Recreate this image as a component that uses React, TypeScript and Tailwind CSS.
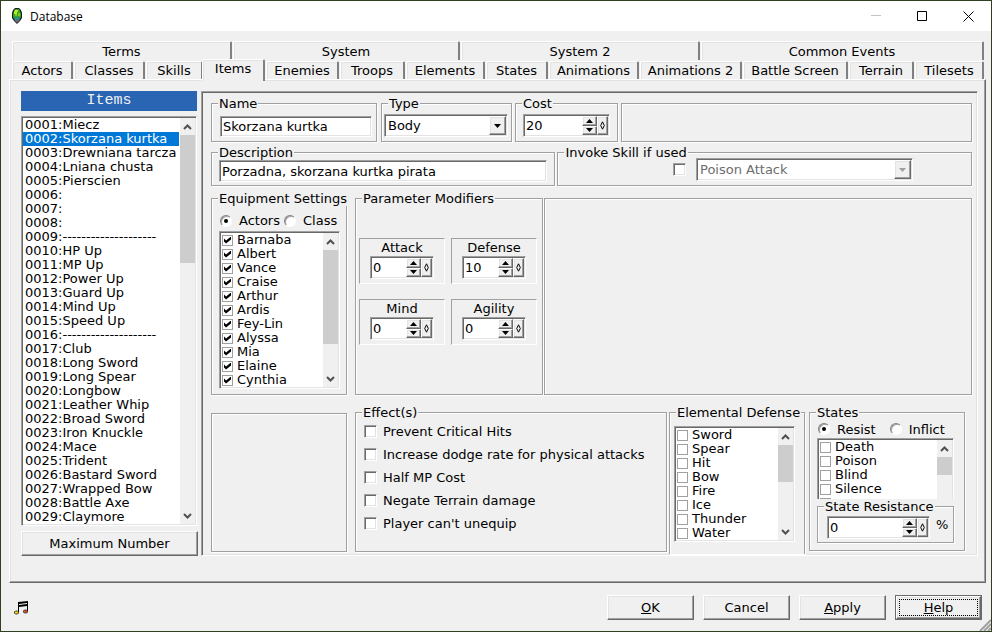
import type { ReactNode } from 'react';
import clsx from 'clsx';

const raised =
  'border border-t-white border-l-white border-r-[#696969] border-b-[#696969] shadow-[inset_-1px_-1px_0_#a0a0a0,inset_1px_1px_0_#e3e3e3]';
const sunken =
  'border border-t-[#a0a0a0] border-l-[#a0a0a0] border-r-white border-b-white shadow-[inset_1px_1px_0_#696969,inset_-1px_-1px_0_#e3e3e3] p-px';
const etched = 'border border-[#a0a0a0] shadow-[1px_1px_0_#fff,inset_1px_1px_0_#fff]';

const topTabs = ['Terms', 'System', 'System 2', 'Common Events'];
const tabs = [
  'Actors',
  'Classes',
  'Skills',
  'Items',
  'Enemies',
  'Troops',
  'Elements',
  'States',
  'Animations',
  'Animations 2',
  'Battle Screen',
  'Terrain',
  'Tilesets',
];

const items = [
  'Miecz',
  'Skorzana kurtka',
  'Drewniana tarcza',
  'Lniana chusta',
  'Pierscien',
  '',
  '',
  '',
  '--------------------',
  'HP Up',
  'MP Up',
  'Power Up',
  'Guard Up',
  'Mind Up',
  'Speed Up',
  '--------------------',
  'Club',
  'Long Sword',
  'Long Spear',
  'Longbow',
  'Leather Whip',
  'Broad Sword',
  'Iron Knuckle',
  'Mace',
  'Trident',
  'Bastard Sword',
  'Wrapped Bow',
  'Battle Axe',
  'Claymore',
];

const actors = ['Barnaba', 'Albert', 'Vance', 'Craise', 'Arthur', 'Ardis', 'Fey-Lin', 'Alyssa', 'Mia', 'Elaine', 'Cynthia'];
const elements = ['Sword', 'Spear', 'Hit', 'Bow', 'Fire', 'Ice', 'Thunder', 'Water'];
const states = ['Death', 'Poison', 'Blind', 'Silence', ''];
const effects = [
  'Prevent Critical Hits',
  'Increase dodge rate for physical attacks',
  'Half MP Cost',
  'Negate Terrain damage',
  "Player can't unequip",
];
const modifiers = [
  { name: 'Attack', value: '0' },
  { name: 'Defense', value: '10' },
  { name: 'Mind', value: '0' },
  { name: 'Agility', value: '0' },
];

// Padding goes on the inner div so that every legend keeps the same indent.
function Group({ title, className, bodyClass, children }: {
  title: string;
  className?: string;
  bodyClass?: string;
  children: ReactNode;
}) {
  return (
    <fieldset className={clsx('min-w-0', etched, className)}>
      <legend className="ml-1.5 whitespace-nowrap bg-[#f0f0f0] px-px leading-[15px]">{title}</legend>
      <div className={bodyClass}>{children}</div>
    </fieldset>
  );
}

function Chevron({ up }: { up?: boolean }) {
  return (
    <svg width="9" height="6" viewBox="0 0 9 6" fill="none" stroke="#505050" strokeWidth="2">
      <path d={up ? 'M1 5 4.500 1.500 8 5' : 'M1 1 4.500 4.500 8 1'} />
    </svg>
  );
}

function ScrollBar({ thumb, down = true }: { thumb: string; down?: boolean }) {
  return (
    <div className="flex w-[15px] shrink-0 flex-col bg-[#f0f0f0]">
      <button type="button" aria-label="Scroll up" className="flex h-[17px] shrink-0 items-center justify-center">
        <Chevron up />
      </button>
      <div className={clsx('shrink-0 bg-[#cdcdcd]', thumb)} />
      {down && (
        <button type="button" aria-label="Scroll down" className="mt-auto flex h-[17px] shrink-0 items-center justify-center">
          <Chevron />
        </button>
      )}
    </div>
  );
}

function CheckList({ names, checked, thumb, down, className }: {
  names: string[];
  checked?: boolean;
  thumb: string;
  down?: boolean;
  className?: string;
}) {
  return (
    <div className={clsx('flex', sunken, className)}>
      <ul className="min-w-0 flex-1 bg-white">
        {names.map((name) => (
          <li key={name}>
            <label className="flex h-3.5 items-center gap-1 pl-px leading-[14px]">
              <input
                type="checkbox"
                defaultChecked={checked}
                className="grid size-[11px] appearance-none place-items-center border border-[#a0a0a0] bg-white checked:before:size-[7px] checked:before:bg-black checked:before:content-[''] checked:before:[clip-path:polygon(0_29%,29%_57%,100%_0,100%_43%,29%_100%,0_71%)]"
              />
              {name}
            </label>
          </li>
        ))}
      </ul>
      <ScrollBar thumb={thumb} down={down} />
    </div>
  );
}

function CheckBox({ label }: { label?: string }) {
  return (
    <input
      type="checkbox"
      aria-label={label}
      className={clsx('size-[13px] shrink-0 appearance-none bg-white checked:bg-[#696969]', sunken)}
    />
  );
}

function Radio({ name, label, checked }: { name: string; label: string; checked?: boolean }) {
  return (
    <label className="flex items-center gap-[7px]">
      <input
        type="radio"
        name={name}
        defaultChecked={checked}
        className="grid size-3 appearance-none place-items-center rounded-full border border-t-[#808080] border-l-[#808080] border-r-white border-b-white bg-white shadow-[inset_1px_1px_0_#a0a0a0] checked:before:size-1 checked:before:rounded-full checked:before:bg-black checked:before:content-['']"
      />
      {label}
    </label>
  );
}

function Triangle({ up, className = 'fill-black' }: { up?: boolean; className?: string }) {
  return (
    <svg width="7" height="4" viewBox="0 0 7 4" className={className}>
      <path d={up ? 'M0 4 3.500 0 7 4z' : 'M0 0 7 0 3.500 4z'} />
    </svg>
  );
}

function Spinner({ label, value, className }: { label: string; value: string; className?: string }) {
  return (
    <div className={clsx('flex h-[23px] bg-white', sunken, className)}>
      <input aria-label={label} defaultValue={value} className="w-0 min-w-0 flex-1 bg-white pl-px outline-none" />
      <div className="flex w-[15px] flex-col">
        <button type="button" aria-label={`Increase ${label}`} className={clsx('flex flex-1 items-center justify-center bg-[#f0f0f0]', raised)}>
          <Triangle up />
        </button>
        <button type="button" aria-label={`Decrease ${label}`} className={clsx('flex flex-1 items-center justify-center bg-[#f0f0f0]', raised)}>
          <Triangle />
        </button>
      </div>
      <button type="button" aria-label={`Adjust ${label}`} className={clsx('flex w-[11px] items-center justify-center bg-[#f0f0f0]', raised)}>
        <svg width="5" height="9" viewBox="0 0 5 9" fill="none" stroke="#000">
          <path d="M2.500 .8 4.300 4.500 2.500 8.200 .7 4.500z" />
        </svg>
      </button>
    </div>
  );
}

function Combo({ label, value, disabled, className }: { label: string; value: string; disabled?: boolean; className?: string }) {
  return (
    <div className={clsx('relative flex h-[23px]', sunken, className)}>
      <select
        aria-label={label}
        disabled={disabled}
        className="w-full appearance-none bg-white pl-0.5 text-black opacity-100 outline-none disabled:text-[#6d6d6d]"
      >
        <option>{value}</option>
      </select>
      <span className={clsx('pointer-events-none absolute inset-y-px right-px flex w-[17px] items-center justify-center bg-[#f0f0f0]', raised)}>
        <Triangle className={disabled ? 'fill-[#a0a0a0]' : 'fill-black'} />
      </span>
    </div>
  );
}

function Tab({ label, active }: { label: string; active?: boolean }) {
  return (
    <button
      type="button"
      role="tab"
      aria-selected={active}
      className={clsx(
        'min-w-0 whitespace-nowrap rounded-t-[2px] border-t border-r-2 border-l border-t-white border-r-[#808080] border-l-white bg-[#f0f0f0] shadow-[inset_1px_1px_0_#e3e3e3]',
        active && 'relative z-10 -mt-0.5 -mb-0.5 -ml-0.5 pb-1',
      )}
    >
      {label}
    </button>
  );
}

function TitleBar() {
  return (
    <header className="flex h-[30px] items-center bg-white">
      <svg width="12" height="17" viewBox="0 0 12 17" className="ml-2.5">
        <path d="M4 0h4l2 2 1 3v5l-2 3-3 3-3-3-2-3V5l1-3z" fill="#171c28" />
        <path d="M4 1h4l1 2 1 3v3l-2 3H4L2 9V6l1-3z" fill="#3aa31c" />
        <path d="M4 2h3v2H6v2H3V4z" fill="#b5ea32" />
        <path d="M7 5h2v3H7zM4 6h2v2H4z" fill="#7ccf1f" />
        <path d="M3 9h6l-1 3H4z" fill="#2b8c8c" />
        <path d="M3 12h6l-3 3z" fill="#77656d" />
      </svg>
      <h1 className="ml-[7px] font-['Open_Sans','Noto_Sans',sans-serif] text-[12px]">Database</h1>
      <div className="ml-auto flex h-full *:flex *:w-[46px] *:items-center *:justify-center">
        <button type="button" aria-label="Minimize" disabled>
          <svg width="11" height="11" stroke="#c4c4c4">
            <path d="M0 4.500h10" />
          </svg>
        </button>
        <button type="button" aria-label="Maximize">
          <svg width="11" height="11" fill="none" stroke="#000">
            <path d="M.5 .5h9v9h-9z" />
          </svg>
        </button>
        <button type="button" aria-label="Close">
          <svg width="11" height="11" fill="none" stroke="#000">
            <path d="M.5 .5l10 10M10.500 .5l-10 10" />
          </svg>
        </button>
      </div>
    </header>
  );
}

function ItemList() {
  return (
    <section className="flex w-[177px] shrink-0 flex-col gap-[5px]">
      <h2 className="mr-px h-5 bg-[#2a65b4] text-center font-['Liberation_Mono',monospace] text-[15px] leading-5 text-[#f0f0f0]">Items</h2>
      <div className={clsx('mr-px flex', sunken)}>
        <ul role="listbox" aria-label="Items" className="min-w-0 flex-1 bg-white pr-px">
          {items.map((item, i) => (
            <li
              key={i}
              role="option"
              aria-selected={i === 1}
              className={clsx('h-3.5 overflow-hidden whitespace-nowrap pl-0.5 leading-[14px]', i === 1 && 'bg-[#0078d7] text-white')}
            >
              {String(i + 1).padStart(4, '0')}:{item}
            </li>
          ))}
        </ul>
        <ScrollBar thumb="h-32" />
      </div>
      <button type="button" className={clsx('h-[25px]', raised)}>
        Maximum Number
      </button>
    </section>
  );
}

function ItemEditor() {
  return (
    <section className={clsx('flex min-w-0 flex-1 flex-col', sunken)}>
      <div className="flex flex-1 flex-col pt-[3px] pr-1 pl-2">
        <div className="grid grid-cols-[167px_131px_103px_1fr] gap-[3px]">
          <Group title="Name" className="mr-px" bodyClass="pt-[5px] pr-1 pl-2">
            <input aria-label="Name" defaultValue="Skorzana kurtka" className={clsx('block h-[21px] w-full bg-white pl-0.5', sunken)} />
          </Group>
          <Group title="Type" bodyClass="pt-[3px] pr-[3px] pb-1 pl-0.5">
            <Combo label="Type" value="Body" />
          </Group>
          <Group title="Cost" bodyClass="px-[7px] pt-[3px] pb-1">
            <Spinner label="Cost" value="20" />
          </Group>
          <div className={clsx('mt-[7px]', etched)} />
        </div>

        <div className="mt-[3px] grid grid-cols-[344fr_414fr] gap-0.5">
          <Group title="Description" bodyClass="px-[7px] pb-[3px]">
            <input
              aria-label="Description"
              defaultValue="Porzadna, skorzana kurtka pirata"
              className={clsx('block h-[22px] w-full bg-white pl-0.5', sunken)}
            />
          </Group>
          <Group title="Invoke Skill if used">
            <div className="-mt-0.5 flex items-center justify-end gap-2.5 pr-[58px]">
              <CheckBox label="Invoke Skill if used" />
              <Combo label="Skill" value="Poison Attack" disabled className="w-[217px]" />
            </div>
          </Group>
        </div>

        <div className="mt-[5px] flex gap-2">
          <Group title="Equipment Settings" className="w-[136px] shrink-0" bodyClass="pb-[5px]">
            <div className="flex h-[25px] items-center gap-1 pt-1 pl-2">
              <Radio name="equip" label="Actors" checked />
              <Radio name="equip" label="Class" />
            </div>
            <CheckList names={actors} checked thumb="h-[94px]" className="mr-1.5 ml-[7px]" />
          </Group>
          <div className="flex flex-1 gap-px">
            <Group title="Parameter Modifiers" className="w-[188px] shrink-0">
              <div className="mt-8 ml-[3px] grid w-fit grid-cols-[86px_86px] gap-x-1.5 gap-y-[15px]">
                {modifiers.map(({ name, value }) => (
                  <div key={name} className="border border-t-[#a0a0a0] border-r-white border-b-white border-l-[#a0a0a0] pb-1">
                    <div className="text-center leading-[17px]">{name}</div>
                    <Spinner label={name} value={value} className="mx-auto w-16" />
                  </div>
                ))}
              </div>
            </Group>
            <div className={clsx('mt-[7px] flex-1', etched)} />
          </div>
        </div>

        <div className="mt-2.5 flex flex-1 gap-2">
          <div className={clsx('mt-2 mb-0.5 w-[136px] shrink-0', etched)} />
          <div className="flex flex-1 gap-0.5">
            <Group title="Effect(s)" className="mb-0.5 flex-1" bodyClass="pl-2">
              {effects.map((effect) => (
                <label key={effect} className="flex h-[23px] items-center gap-1.5 whitespace-nowrap">
                  <CheckBox />
                  {effect}
                </label>
              ))}
            </Group>
            <div className="flex gap-1 pr-[7px]">
              <Group title="Elemental Defense" className="w-[136px] border-b-0">
                <CheckList names={elements} thumb="h-[37px]" className="mt-1.5 mr-[9px] ml-1" />
              </Group>
              <Group title="States" className="mb-[3px] w-[156px]" bodyClass="pr-2.5 pb-[7px] pl-[7px]">
                <div className="flex h-[18px] items-center gap-3.5 pl-px">
                  <Radio name="state" label="Resist" checked />
                  <Radio name="state" label="Inflict" />
                </div>
                <div className="h-[61px] overflow-hidden">
                  <CheckList names={states} thumb="h-[18px]" down={false} />
                </div>
                <Group title="State Resistance" bodyClass="pt-0.5 pb-[3px]">
                  <div className="flex gap-1.5 pl-[9px]">
                    <Spinner label="State Resistance" value="0" className="w-[103px]" />
                    <span>%</span>
                  </div>
                </Group>
              </Group>
            </div>
          </div>
        </div>
      </div>
    </section>
  );
}

function Footer() {
  return (
    <footer className="relative flex items-center gap-[9px] pt-2.5 pb-[11px] pr-[9px] pl-[13px]">
      <svg width="15" height="14" viewBox="0 0 15 14" className="mr-auto">
        <path d="M4 1 14 0v10h-1V5L5 6v5H4z" fill="#000" />
        <path d="M5 3.500 13 2.500" stroke="#f0f0f0" />
        <ellipse cx="2.500" cy="11.500" rx="2.500" ry="2" fill="#333" />
        <ellipse cx="11.500" cy="10.500" rx="2.500" ry="2" fill="#333" />
        <path d="M1 10.500h3v2H1z" fill="#ffd400" />
        <path d="M10 9.500h3v2h-3z" fill="#f04a20" />
      </svg>
      <button type="button" className={clsx('h-[25px] w-[87px]', raised)}>
        <u>O</u>K
      </button>
      <button type="button" className={clsx('h-[25px] w-[87px]', raised)}>
        Cancel
      </button>
      <button type="button" className={clsx('h-[25px] w-[87px]', raised)}>
        <u>A</u>pply
      </button>
      <button type="button" className="h-[25px] w-[87px] border border-[#696969]">
        <span className={clsx('flex h-[23px] p-0.5', raised)}>
          <span className="flex flex-1 items-center justify-center border border-dotted border-black">
            <span>
              <u>H</u>elp
            </span>
          </span>
        </span>
      </button>
      <svg width="12" height="12" viewBox="0 0 12 12" stroke="#a0a0a0" strokeWidth="2" className="absolute right-0 bottom-0">
        <path d="M1 12 12 1M5 12 12 5M9 12 12 9" />
      </svg>
    </footer>
  );
}

export default function App() {
  return (
    <div className="flex min-h-screen flex-col border border-[#2f3f1f] bg-[#f0f0f0] font-['Verdana','DejaVu_Sans',sans-serif] text-[13px] leading-[17px] text-black">
      <TitleBar />
      <main className="flex-1 pt-2.5 pr-[5px] pl-2">
        <div role="tablist" className="mr-0.5 ml-[3px] flex flex-col">
          <div className="grid h-[19px] grid-cols-[220fr_227fr_239fr_283fr] gap-px">
            {topTabs.map((tab) => (
              <Tab key={tab} label={tab} />
            ))}
          </div>
          <div className="mt-px grid h-[18px] grid-cols-[61fr_71fr_57fr_61fr_73fr_65fr_79fr_62fr_90fr_102fr_105fr_65fr_69fr] gap-px">
            {tabs.map((tab) => (
              <Tab key={tab} label={tab} active={tab === 'Items'} />
            ))}
          </div>
        </div>
        <div className={clsx('flex gap-[3px] pt-[11px] pr-[7px] pb-[26px] pl-[11px]', raised)}>
          <ItemList />
          <ItemEditor />
        </div>
      </main>
      <Footer />
    </div>
  );
}
